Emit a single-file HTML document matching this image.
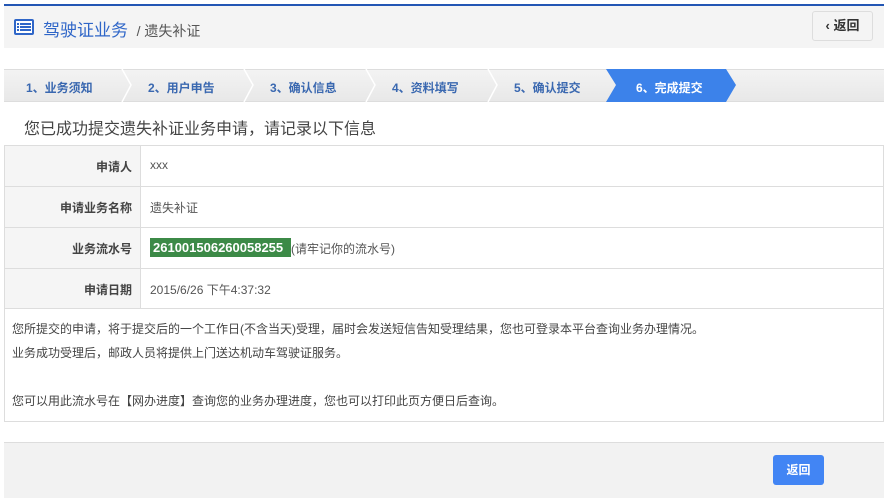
<!DOCTYPE html>
<html><head><meta charset="utf-8"><style>
*{margin:0;padding:0;box-sizing:border-box}
body{width:889px;height:498px;background:#fff;font-family:"Liberation Sans","Noto Sans CJK SC",sans-serif;position:relative;overflow:hidden;color:#333}
.a{position:absolute}
</style></head><body>
<div class="a" style="left:4px;top:4px;width:880px;height:2px;background:#2356b4"></div>
<div class="a" style="left:4px;top:6px;width:880px;height:42px;background:#f4f4f4"></div>
<svg class="a" style="left:13px;top:18px" width="22" height="18" viewBox="0 0 22 18"><rect x="1" y="1" width="20" height="16" rx="2" fill="#2f66c8"/><rect x="3" y="3" width="16" height="12" fill="#fff"/><rect x="4" y="5" width="2" height="2" fill="#2f66c8"/><rect x="7" y="5" width="11" height="2" fill="#2f66c8"/><rect x="4" y="8" width="2" height="2" fill="#2f66c8"/><rect x="7" y="8" width="11" height="2" fill="#2f66c8"/><rect x="4" y="11" width="2" height="2" fill="#2f66c8"/><rect x="7" y="11" width="11" height="2" fill="#2f66c8"/></svg>
<div class="a" style="left:43px;top:16px;font-size:17px;color:#2f66c8;white-space:nowrap">驾驶证业务 <span style="color:#555;font-size:14px">&nbsp;/ 遗失补证</span></div>
<div class="a" style="left:812px;top:11px;width:61px;height:30px;border:1px solid #ddd;border-radius:3px;background:#f4f4f4;font-size:13px;font-weight:bold;line-height:28px;text-align:center;color:#333">‹ 返回</div>
<div class="a" style="left:4px;top:69px;width:880px;height:33px;background:linear-gradient(#f3f3f3,#e8e8e8);border-top:1px solid #ddd;border-bottom:1px solid #ddd"></div>
<svg class="a" style="left:4px;top:69px" width="880" height="33">
<g stroke="#fff" stroke-width="1.5" fill="none"><path d="M118 0 L127 16 L118 33"/><path d="M240 0 L249 16 L240 33"/><path d="M362 0 L371 16 L362 33"/><path d="M484 0 L493 16 L484 33"/></g>
<path d="M602 0 L722 0 L732 16 L722 33 L602 33 L612 16 Z" fill="#3c82ea"/>
</svg>
<div class="a" style="left:4px;top:79px;font-size:12px;font-weight:bold;color:#3a68b0;white-space:nowrap">
<span class="a" style="left:22px">1、业务须知</span><span class="a" style="left:144px">2、用户申告</span><span class="a" style="left:266px">3、确认信息</span><span class="a" style="left:388px">4、资料填写</span><span class="a" style="left:510px">5、确认提交</span><span class="a" style="left:632px;color:#fff">6、完成提交</span></div>
<div class="a" style="left:24px;top:115px;font-size:16px;color:#444;white-space:nowrap">您已成功提交遗失补证业务申请，请记录以下信息</div>
<div class="a" style="left:4px;top:145px;width:880px;height:277px;border:1px solid #ddd"></div>
<div class="a" style="left:5px;top:146px;width:136px;height:162px;background:#f5f5f5;border-right:1px solid #ddd"></div>
<div class="a" style="left:5px;top:186px;width:878px;height:1px;background:#ddd"></div>
<div class="a" style="left:5px;top:227px;width:878px;height:1px;background:#ddd"></div>
<div class="a" style="left:5px;top:268px;width:878px;height:1px;background:#ddd"></div>
<div class="a" style="left:5px;top:308px;width:878px;height:1px;background:#ddd"></div>
<div class="a" style="left:0;width:132px;text-align:right;font-size:12px;font-weight:bold;color:#444;top:158px">申请人</div>
<div class="a" style="left:0;width:132px;text-align:right;font-size:12px;font-weight:bold;color:#444;top:199px">申请业务名称</div>
<div class="a" style="left:0;width:132px;text-align:right;font-size:12px;font-weight:bold;color:#444;top:240px">业务流水号</div>
<div class="a" style="left:0;width:132px;text-align:right;font-size:12px;font-weight:bold;color:#444;top:281px">申请日期</div>
<div class="a" style="left:150px;top:158px;font-size:12px;color:#555">xxx</div>
<div class="a" style="left:150px;top:199px;font-size:12px;color:#555">遗失补证</div>
<div class="a" style="left:150px;top:238px;height:19px;width:141px;background:#3c8a47;color:#fff;font-weight:bold;font-size:13px;line-height:19px;padding-left:3px">261001506260058255</div>
<div class="a" style="left:291px;top:240px;font-size:12px;color:#555">(请牢记你的流水号)</div>
<div class="a" style="left:150px;top:281px;font-size:12px;color:#555">2015/6/26 下午4:37:32</div>
<div class="a" style="left:12px;top:317px;font-size:12px;color:#444;line-height:24px;white-space:nowrap">您所提交的申请，将于提交后的一个工作日(不含当天)受理，届时会发送短信告知受理结果，您也可登录本平台查询业务办理情况。<br>业务成功受理后，邮政人员将提供上门送达机动车驾驶证服务。<br><br>您可以用此流水号在【网办进度】查询您的业务办理进度，您也可以打印此页方便日后查询。</div>
<div class="a" style="left:4px;top:442px;width:880px;height:56px;background:#f2f2f2;border-top:1px solid #ddd"></div>
<div class="a" style="left:773px;top:455px;width:51px;height:30px;background:#4285f4;border-radius:3px;color:#fff;font-size:12px;font-weight:bold;text-align:center;line-height:30px">返回</div>
</body></html>
